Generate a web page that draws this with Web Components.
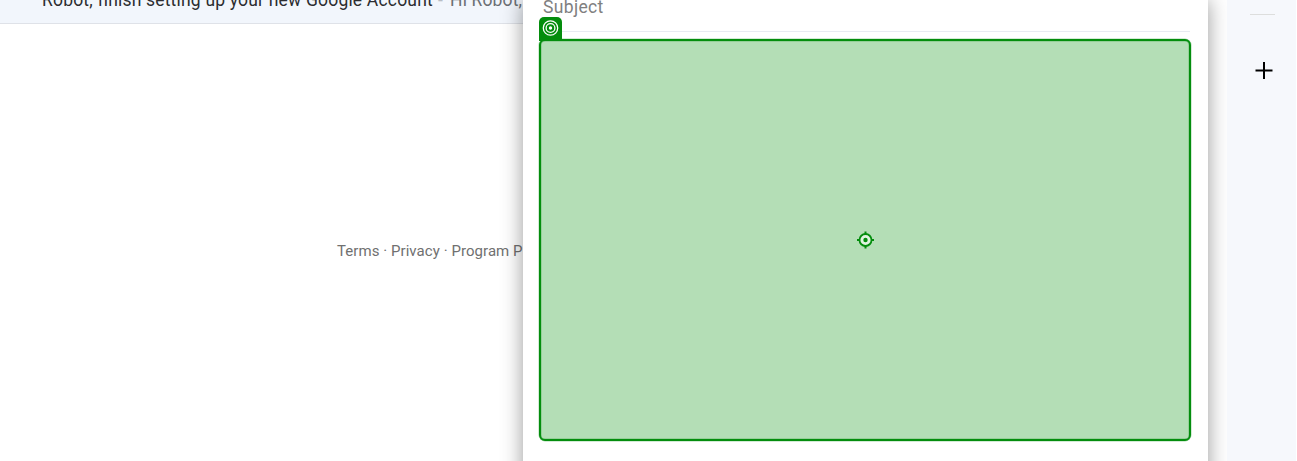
<!DOCTYPE html>
<html lang="en">
<head>
<meta charset="utf-8">
<title>Mail</title>
<style>
html,body{margin:0;height:100%;overflow:hidden;background:#fff;font-family:Roboto,"Liberation Sans",sans-serif}
</style>
</head>
<body>
<mail-app></mail-app>
<script>
class MailRow extends HTMLElement{
  constructor(){super();this.attachShadow({mode:'open'}).innerHTML=`
<style>
:host{display:flex;align-items:flex-end;box-sizing:border-box;width:1180px;height:24px;padding:0 0 12px 42px;background:#f2f6fc;border-bottom:1px solid #dfe2e8;white-space:pre;font-size:17.5px;line-height:22px;color:#6b6f74}
.s{color:#2c2d30;width:396px;letter-spacing:.19px}
.d{width:12px;color:#b9bdc4}
.p{letter-spacing:.15px}
</style><span class="s"><slot name="subject"></slot></span><span class="d">-</span><span class="p"><slot></slot></span>`}
}
customElements.define('mail-row',MailRow);

class PageFooter extends HTMLElement{
  constructor(){super();this.attachShadow({mode:'open'}).innerHTML=`
<style>:host{display:block;padding:217px 0 0 337px;font-size:15px;line-height:20px;color:#707070;white-space:nowrap;letter-spacing:.06px}</style><slot></slot>`}
}
customElements.define('page-footer',PageFooter);

class SideRail extends HTMLElement{
  constructor(){super();this.attachShadow({mode:'open'}).innerHTML=`
<style>
:host{display:flex;flex-direction:column;align-items:center;box-sizing:border-box;width:69px;padding:14px 0 0 2px;background:#f6f8fc}
hr{width:25px;height:1px;border:0;margin:0 0 47px;background:#dddedd}
svg{display:block;margin-left:2px}
</style><hr><svg width="18" height="18" viewBox="0 0 18 18"><path d="M9 0v17M.5 8.5h17" stroke="#000" stroke-width="2"/></svg>`}
}
customElements.define('side-rail',SideRail);

class TargetRegion extends HTMLElement{
  constructor(){super();this.attachShadow({mode:'open'}).innerHTML=`
<style>
:host{display:grid;place-items:center;position:relative;box-sizing:border-box;width:652px;height:402px;border:2px solid #048d0d;border-radius:6px;background:#b4deb6;box-shadow:0 0 0 .5px rgba(4,141,13,.35),inset 0 0 0 .5px rgba(4,141,13,.35)}
.badge{position:absolute;left:-2px;top:-24px;width:23px;height:24px;border-radius:5px 5px 0 0;background:#048d0d}
svg{display:block}
.aim{transform:translateX(.5px)}
</style>
<span class="badge"><svg width="23" height="24" viewBox="0 0 23 24" fill="none" stroke="#fff"><circle cx="11.5" cy="11" r="7.2" stroke-width="1.3"/><circle cx="11.5" cy="11" r="4.4" stroke-width="1.3"/><circle cx="11.5" cy="11" r="1.7" fill="#fff" stroke="none"/></svg></span>
<svg class="aim" width="18" height="18" viewBox="0 0 18 18"><path d="M9 .5v3M9 14.5v3M.5 9h3M14.5 9h3" stroke="#048d0d" stroke-width="2"/><circle cx="9" cy="9" r="6" fill="#dff3df" stroke="#048d0d" stroke-width="1.8"/><circle cx="9" cy="9" r="2.2" fill="#048d0d"/></svg>`}
}
customElements.define('target-region',TargetRegion);

class ComposeWindow extends HTMLElement{
  constructor(){super();this.attachShadow({mode:'open'}).innerHTML=`
<style>
:host{display:block;box-sizing:border-box;width:685px;padding:0 17px 0 16px;background:#fff;box-shadow:0 0 20px 0 rgba(0,0,0,.4)}
.subject{box-sizing:border-box;height:32px;padding:0 0 0 4px;margin:0 1px 7px 0;border-bottom:1px solid #e8ebf1}
.t{display:block;position:relative;top:-4px;font-size:17.5px;line-height:22px;color:#808080;letter-spacing:.35px}
</style><div class="subject"><span class="t"><slot name="subject"></slot></span></div><slot></slot>`}
}
customElements.define('compose-window',ComposeWindow);

class MailApp extends HTMLElement{
  constructor(){super();this.attachShadow({mode:'open'}).innerHTML=`
<style>
:host{display:grid;grid-template-columns:1227px 69px;height:461px;overflow:hidden;position:relative}
main{position:relative;overflow:hidden}
compose-window{position:absolute;left:523px;top:0;height:500px}
</style>
<main>
<mail-row><span slot="subject">Robot, finish setting up your new Google Account</span>Hi Robot,</mail-row>
<page-footer>Terms · Privacy · Program P</page-footer>
<compose-window><span slot="subject">Subject</span><target-region></target-region></compose-window>
</main>
<side-rail></side-rail>`}
}
customElements.define('mail-app',MailApp);
</script>
</body>
</html>
